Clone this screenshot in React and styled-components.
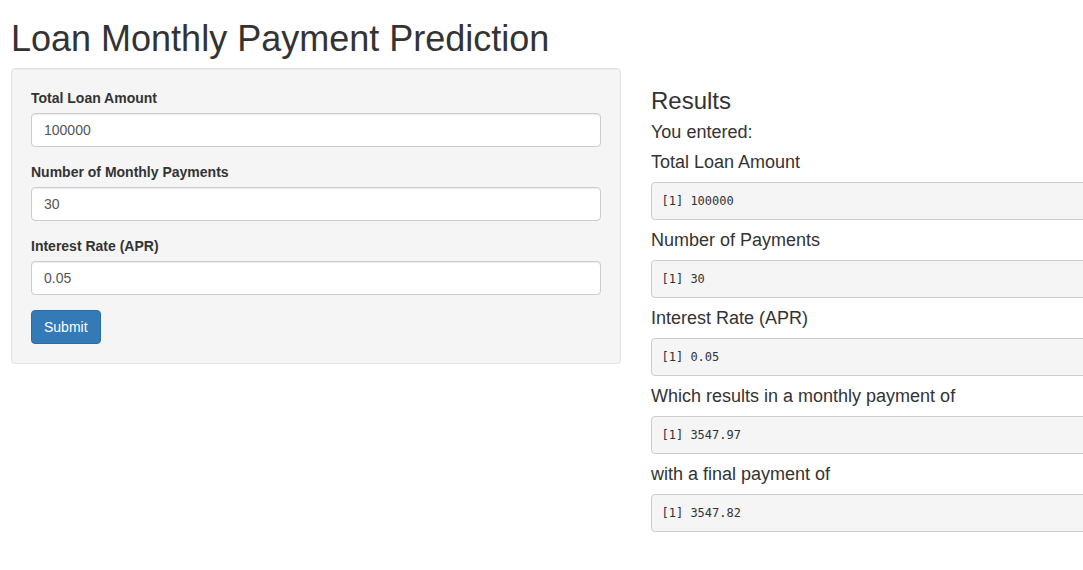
import React from "react";
import styled, { createGlobalStyle } from "styled-components";

const Global = createGlobalStyle`
  html, body { margin: 0; padding: 0; background: #fff; overflow: hidden; }
  body {
    font-family: "Liberation Sans", Arial, Helvetica, sans-serif;
    font-size: 14px;
    line-height: 1.42857;
    color: #333;
  }
  * { box-sizing: border-box; }
`;

const Page = styled.div`
  padding-left: 11px;
  width: 1083px;
  overflow: hidden;
`;

const Title = styled.h1`
  font-size: 36px;
  font-weight: 500;
  line-height: 39px;
  margin: 19px 0 10px;
`;

const Row = styled.div`
  display: flex;
  align-items: flex-start;
  gap: 30px;
`;

const Well = styled.form`
  flex: 0 0 610px;
  background: #f5f5f5;
  border: 1px solid #e3e3e3;
  border-radius: 4px;
  box-shadow: inset 0 1px 1px rgba(0, 0, 0, 0.05);
  padding: 19px;
  display: flex;
  flex-direction: column;
  gap: 15px;
`;

const Field = styled.div`
  display: flex;
  flex-direction: column;
  gap: 5px;
`;

const Label = styled.label`
  font-weight: 700;
  font-size: 14px;
  line-height: 20px;
`;

const Input = styled.input`
  height: 34px;
  width: 100%;
  padding: 6px 12px;
  font-family: inherit;
  font-size: 14px;
  color: #555;
  background: #fff;
  border: 1px solid #ccc;
  border-radius: 4px;
  box-shadow: inset 0 1px 1px rgba(0, 0, 0, 0.075);
  outline: none;
`;

const Button = styled.button`
  align-self: flex-start;
  height: 34px;
  padding: 6px 12px;
  font-family: inherit;
  font-size: 14px;
  line-height: 20px;
  color: #fff;
  background: #337ab7;
  border: 1px solid #2e6da4;
  border-radius: 4px;
  cursor: pointer;
`;

const Main = styled.div`
  flex: 0 0 1248px;
`;

const Heading = styled.h3`
  font-size: 24px;
  font-weight: 500;
  line-height: 26.4px;
  margin: 20px 0 8px;
`;

const Sub = styled.h4`
  font-size: 18px;
  font-weight: 500;
  line-height: 20px;
  margin: 0 0 10px;
`;

const Pre = styled.pre`
  margin: 0 0 10px;
  padding: 9.5px;
  font-family: "DejaVu Sans Mono", "Liberation Mono", monospace;
  font-size: 12px;
  line-height: 17px;
  color: #333;
  background: #f5f5f5;
  border: 1px solid #ccc;
  border-radius: 4px;
`;

const results = [
  ["Total Loan Amount", "[1] 100000"],
  ["Number of Payments", "[1] 30"],
  ["Interest Rate (APR)", "[1] 0.05"],
  ["Which results in a monthly payment of", "[1] 3547.97"],
  ["with a final payment of", "[1] 3547.82"],
];

const fields = [
  ["Total Loan Amount", "100000"],
  ["Number of Monthly Payments", "30"],
  ["Interest Rate (APR)", "0.05"],
];

export default function App() {
  return (
    <Page>
      <Global />
      <Title>Loan Monthly Payment Prediction</Title>
      <Row>
        <Well onSubmit={(e) => e.preventDefault()}>
          {fields.map(([label, value]) => (
            <Field key={label}>
              <Label>{label}</Label>
              <Input type="number" defaultValue={value} />
            </Field>
          ))}
          <Button type="submit">Submit</Button>
        </Well>
        <Main>
          <Heading>Results</Heading>
          <Sub>You entered:</Sub>
          {results.map(([label, value]) => (
            <React.Fragment key={label}>
              <Sub>{label}</Sub>
              <Pre>{value}</Pre>
            </React.Fragment>
          ))}
        </Main>
      </Row>
    </Page>
  );
}
